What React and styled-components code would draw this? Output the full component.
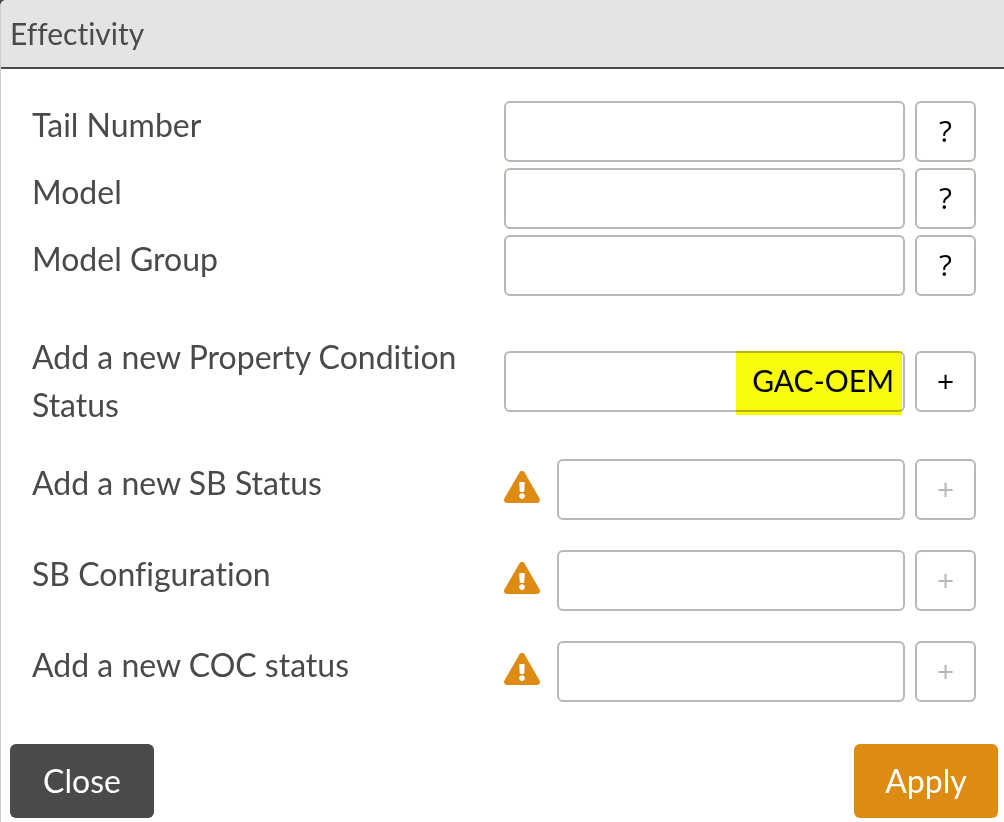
import React from 'react';
import styled, { createGlobalStyle } from 'styled-components';
import { FaExclamationTriangle } from 'react-icons/fa';

const GlobalStyle = createGlobalStyle`
  * {
    box-sizing: border-box;
  }
  body {
    margin: 0;
    background-color: #4a4a4a;
    font-family: Lato, "Open Sans", sans-serif;
    font-size: 32px;
    font-variant-ligatures: none;
    color: #4a4a4a;
  }
  button,
  input {
    font: inherit;
  }
`;

const Dialog = styled.section`
  min-height: 100vh;
  background-color: #fff;
  border-left: 1px solid #ccc;
  border-radius: 6px 0 0 0;
  overflow: hidden;
`;

const Header = styled.header`
  padding: 9px 9px 10px;
  background-color: #e4e4e4;
  border-bottom: 2px solid #4a4a4a;
`;

const Title = styled.h1`
  margin: 0;
  font-size: 30px;
  font-weight: normal;
  line-height: 48px;
`;

const Form = styled.form`
  padding: 32px 28px 0 31px;
`;

const Group = styled.div`
  display: flex;
  flex-direction: column;
  gap: ${(props) => props.$gap};
  margin-bottom: ${(props) => props.$space || '0'};
`;

const Row = styled.div`
  display: grid;
  grid-template-columns: 1fr 1fr;
  align-items: ${(props) => (props.$center ? 'center' : 'start')};
`;

const Label = styled.label`
  line-height: 48px;
`;

const Controls = styled.div`
  display: flex;
  align-items: center;
  gap: 10px;
`;

const Warning = styled(FaExclamationTriangle)`
  flex: none;
  width: 36px;
  height: 32px;
  margin: 0 7px 5px 0;
  color: #dd8b13;
`;

const Field = styled.div`
  position: relative;
  flex: 1;
  min-width: 0;
`;

const Input = styled.input`
  display: block;
  width: 100%;
  height: 61px;
  padding: 0 9px 2px;
  border: 2px solid #b9b9b4;
  border-radius: 6px;
  background-color: #fff;
  color: #000;
  font-size: 30px;
  text-align: right;
  outline: none;
`;

const Highlight = styled.span`
  position: absolute;
  top: 0;
  right: 3px;
  bottom: -3px;
  width: 166px;
  background-color: #f9fb0c;
  mix-blend-mode: multiply;
  pointer-events: none;
`;

const SquareBtn = styled.button`
  flex: none;
  width: 61px;
  height: 61px;
  padding: 0 0 2px;
  border: 2px solid #b9b9b4;
  border-radius: 6px;
  background-color: #fff;
  color: #000;
  font-family: "Open Sans", sans-serif;
  font-size: 30px;
  cursor: pointer;
  &:disabled {
    color: #b9b9b4;
    cursor: default;
  }
`;

const Footer = styled.footer`
  display: flex;
  justify-content: space-between;
  padding: 42px 6px 4px 9px;
`;

const Btn = styled.button`
  height: 74px;
  min-width: 144px;
  padding: 0 30px 2px;
  border: none;
  border-radius: 6px;
  background-color: ${(props) => (props.$primary ? '#dd8b13' : '#4a4a4a')};
  color: #fff;
  cursor: pointer;
`;

const FormRow = ({ id, label, value = '', action, warning, disabled, highlight, center }) => (
  <Row $center={center}>
    <Label htmlFor={id}>{label}</Label>
    <Controls>
      {warning && <Warning aria-hidden="true" />}
      <Field>
        <Input id={id} type="text" defaultValue={value} />
        {highlight && <Highlight />}
      </Field>
      <SquareBtn type="button" disabled={disabled} aria-label={`${label} ${action}`}>
        {action}
      </SquareBtn>
    </Controls>
  </Row>
);

const App = () => {
  return (
    <>
      <GlobalStyle />
      <Dialog>
        <Header>
          <Title>Effectivity</Title>
        </Header>
        <Form id="effectivity" onSubmit={(e) => e.preventDefault()}>
          <Group $gap="6px" $space="37px">
            <FormRow id="tailNumber" label="Tail Number" action="?" />
            <FormRow id="model" label="Model" action="?" />
            <FormRow id="modelGroup" label="Model Group" action="?" />
          </Group>
          <Group $gap="30px">
            <FormRow
              id="condition"
              label="Add a new Property Condition Status"
              value="GAC-OEM"
              action="+"
              highlight
              center
            />
            <FormRow id="sbStatus" label="Add a new SB Status" action="+" warning disabled />
            <FormRow id="sbConfig" label="SB Configuration" action="+" warning disabled />
            <FormRow id="cocStatus" label="Add a new COC status" action="+" warning disabled />
          </Group>
        </Form>
        <Footer>
          <Btn type="button">Close</Btn>
          <Btn type="submit" form="effectivity" $primary>
            Apply
          </Btn>
        </Footer>
      </Dialog>
    </>
  );
};

export default App;
